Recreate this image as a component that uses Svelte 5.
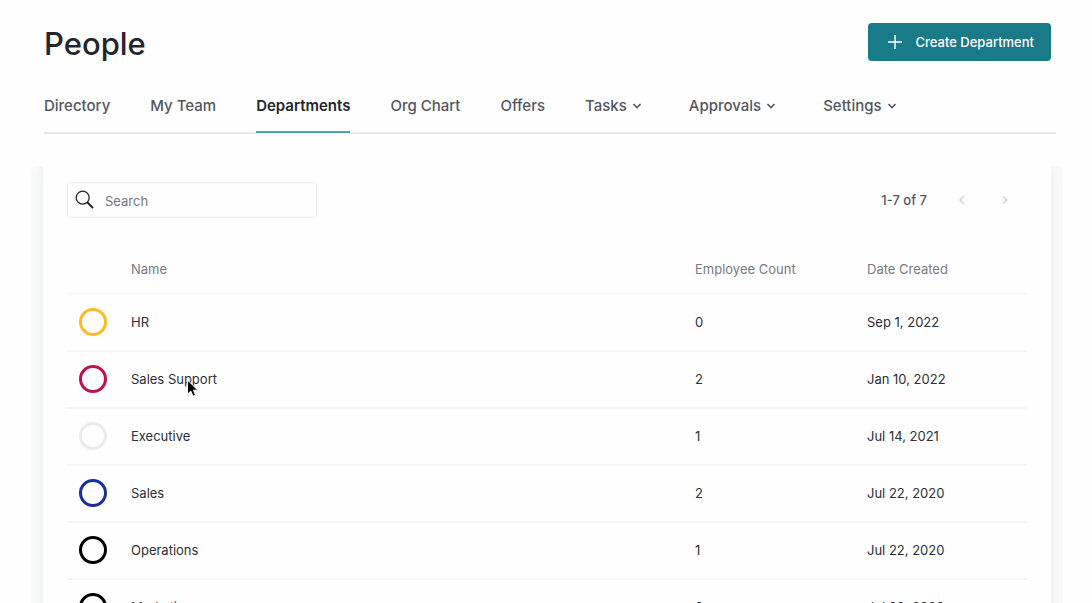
<script>
  const tabs = [
    { label: 'Directory' },
    { label: 'My Team' },
    { label: 'Departments', active: true },
    { label: 'Org Chart' },
    { label: 'Offers' },
    { label: 'Tasks', menu: true },
    { label: 'Approvals', menu: true },
    { label: 'Settings', menu: true }
  ];

  const departments = [
    { name: 'HR', count: 0, created: 'Sep 1, 2022', color: '#fbbc27' },
    { name: 'Sales Support', count: 2, created: 'Jan 10, 2022', color: '#be1250' },
    { name: 'Executive', count: 1, created: 'Jul 14, 2021', color: '#ebebeb' },
    { name: 'Sales', count: 2, created: 'Jul 22, 2020', color: '#1a2f98' },
    { name: 'Operations', count: 1, created: 'Jul 22, 2020', color: '#000000' },
    { name: 'Marketing', count: 0, created: 'Jul 22, 2020', color: '#000000' }
  ];

  let query = $state('');
  const rows = $derived(
    departments.filter((d) => d.name.toLowerCase().includes(query.trim().toLowerCase()))
  );
</script>

<div class="page">
  <header>
    <h1>People</h1>
    <button class="create" type="button">
      <svg width="16" height="16" viewBox="0 0 16 16" aria-hidden="true">
        <path d="M8 1v14M1 8h14" fill="none" stroke="currentColor" stroke-width="1.4" />
      </svg>
      Create Department
    </button>
  </header>

  <nav aria-label="People">
    {#each tabs as tab}
      {#if tab.menu}
        <button class="tab" type="button" aria-haspopup="menu">
          {tab.label}
          <svg width="22" height="16" viewBox="0 0 22 16" aria-hidden="true">
            <path d="M6.500 6l3.500 3.500L13.500 6" fill="none" stroke="currentColor" stroke-width="1.6" />
          </svg>
        </button>
      {:else}
        <a class="tab" class:active={tab.active} href="#top" aria-current={tab.active ? 'page' : undefined}>{tab.label}</a>
      {/if}
    {/each}
  </nav>

  <main>
    <section class="card">
      <div class="toolbar">
        <label class="search">
          <svg width="20" height="20" viewBox="0 0 20 20" aria-hidden="true">
            <circle cx="7.700" cy="7.700" r="6.500" fill="none" stroke="#23262d" stroke-width="1.300" />
            <path d="M12.300 12.300 18 18" fill="none" stroke="#23262d" stroke-width="2" />
          </svg>
          <input type="search" placeholder="Search" aria-label="Search" bind:value={query} />
        </label>
        <div class="pager">
          <span>1-7 of 7</span>
          <button type="button" aria-label="Previous page" disabled>
            <svg width="16" height="16" viewBox="0 0 16 16" aria-hidden="true">
              <path d="M9.800 4.200 6 8l3.800 3.800" fill="none" stroke="currentColor" stroke-width="1.400" />
            </svg>
          </button>
          <button type="button" aria-label="Next page" disabled>
            <svg width="16" height="16" viewBox="0 0 16 16" aria-hidden="true">
              <path d="M6.200 4.200 10 8l-3.800 3.800" fill="none" stroke="currentColor" stroke-width="1.400" />
            </svg>
          </button>
        </div>
      </div>

      <table>
        <thead>
          <tr>
            <th class="mark"></th>
            <th scope="col">Name</th>
            <th scope="col" class="count">Employee Count</th>
            <th scope="col" class="date">Date Created</th>
          </tr>
        </thead>
        <tbody>
          {#each rows as row}
            <tr>
              <td class="mark"><span class="ring" style:border-color={row.color}></span></td>
              <td>
                <span class="name">
                  {row.name}
                  {#if row.name === 'Sales Support'}
                    <svg class="pointer" width="14" height="20" viewBox="0 0 14 20" aria-hidden="true">
                      <path d="M1.500 1v14.200l3.300-3.100 2.200 5.200 2.600-1.100-2.200-5h4.400z" fill="#000" stroke="#fff" stroke-width="1" />
                    </svg>
                  {/if}
                </span>
              </td>
              <td class="count">{row.count}</td>
              <td class="date">{row.created}</td>
            </tr>
          {/each}
        </tbody>
      </table>
    </section>
  </main>
</div>

<style>
  :global(body) {
    margin: 0;
    background: #fefefe;
  }

  .page {
    display: flex;
    flex-direction: column;
    height: 100vh;
    overflow: hidden;
    color: #2c2f36;
    font-family: Inter, 'Liberation Sans', sans-serif;
    font-size: 13px;
    line-height: 20px;
  }

  button,
  input {
    font: inherit;
    color: inherit;
  }

  button {
    padding: 0;
    border: 0;
    background: none;
  }

  header {
    display: flex;
    align-items: flex-start;
    justify-content: space-between;
    padding: 23px 41px 0 44px;
  }

  h1 {
    margin: 0;
    color: #23262d;
    font-size: 31px;
    font-weight: 500;
    line-height: 42px;
  }

  .create {
    display: flex;
    align-items: center;
    gap: 12px;
    height: 38px;
    padding: 0 17px 0 19px;
    border-radius: 4px;
    background: #187b87;
    color: #fff;
    font-weight: 500;
  }

  nav {
    display: flex;
    gap: 40px;
    margin: 21px 36px 0 44px;
    border-bottom: 2px solid #e8e9e9;
  }

  .tab {
    display: flex;
    align-items: center;
    height: 39px;
    margin-bottom: -1px;
    padding-bottom: 6px;
    box-sizing: content-box;
    border-bottom: 2px solid transparent;
    color: #535660;
    font-size: 15px;
    font-weight: 500;
    text-decoration: none;
    white-space: nowrap;
  }

  .active {
    border-bottom-color: #53a5ad;
    color: #23262d;
    font-weight: 600;
  }

  main {
    flex: 1;
    min-height: 0;
    margin: 32px 29px 0 31px;
    padding: 0 12px;
    overflow: hidden;
  }

  .card {
    padding: 16px 24px;
    background: #fefefe;
    box-shadow: 0 0 18px 6px rgba(30, 36, 44, 0.07);
  }

  .toolbar {
    display: flex;
    align-items: center;
    justify-content: space-between;
  }

  .search {
    display: flex;
    align-items: center;
    gap: 10px;
    box-sizing: border-box;
    width: 250px;
    height: 36px;
    padding: 0 7px;
    border: 1px solid #ebefef;
    border-radius: 3px;
  }

  .search input {
    flex: 1;
    min-width: 0;
    padding: 2px 0 0;
    border: 0;
    outline: 0;
    background: none;
  }

  .search input::placeholder {
    color: #73767d;
    opacity: 1;
  }

  .pager {
    display: flex;
    align-items: center;
    gap: 27px;
    padding-right: 14px;
    color: #535660;
    font-weight: 500;
  }

  .pager button {
    display: flex;
    color: #cfd0d2;
  }

  table {
    width: 100%;
    margin-top: 26px;
    border-spacing: 0;
    table-layout: fixed;
  }

  th,
  td {
    box-sizing: border-box;
    height: 57px;
    padding: 0;
    border-bottom: 2px solid #f3f4f4;
    text-align: left;
    font-weight: 400;
  }

  th {
    height: 50px;
    border-bottom-width: 1px;
    color: #777a80;
  }

  tbody tr:first-child td {
    height: 58px;
  }

  tbody tr + tr td {
    padding-bottom: 2px;
  }

  .mark {
    width: 64px;
  }

  .count {
    width: 172px;
  }

  .date {
    width: 160px;
  }

  .ring {
    display: block;
    box-sizing: border-box;
    width: 28px;
    height: 28px;
    margin-left: 12px;
    border: 3px solid;
    border-radius: 50%;
  }

  .name {
    position: relative;
  }

  .pointer {
    position: absolute;
    top: 8px;
    left: 55px;
  }
</style>
